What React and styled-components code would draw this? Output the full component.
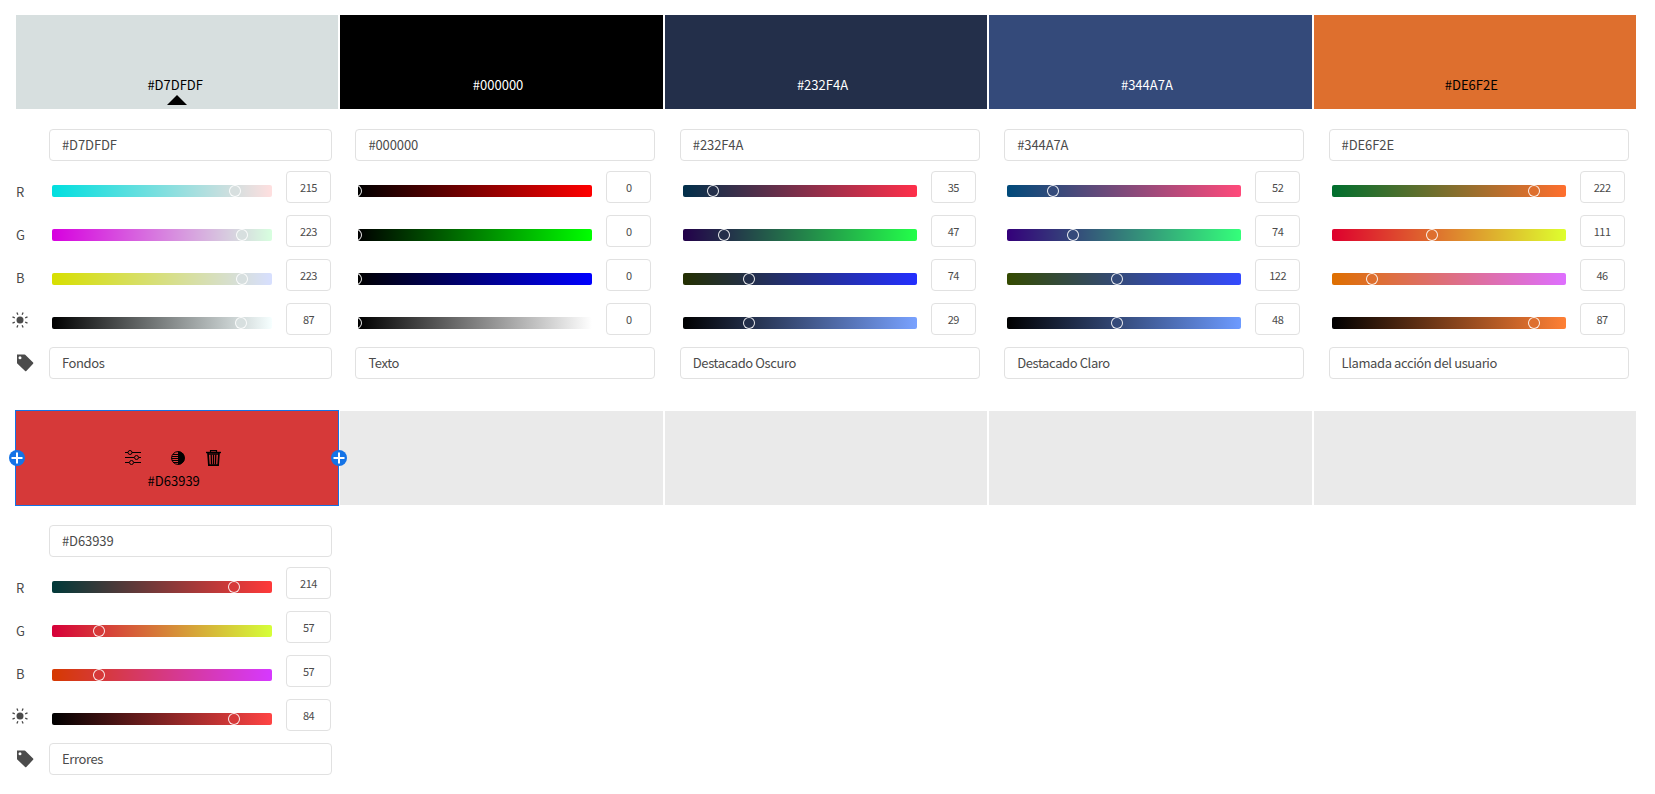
import React from "react";
import styled, { createGlobalStyle } from "styled-components";

const Global = createGlobalStyle`
  * { box-sizing: border-box; }
  body { margin: 0; background: #fff; color: #4b4b4b; font-family: "Noto Sans CJK SC", "Noto Sans", sans-serif; font-size: 13px; }
`;

const Page = styled.main`
  padding: 15px 19px 0 16px;
  width: 1655px;
  height: 794px;
  overflow: hidden;
`;
const Group = styled.section`
  height: 396px;
`;
const Swatches = styled.div`
  display: grid;
  grid-template-columns: repeat(5, 1fr);
  gap: 2px;
  height: 94px;
`;
const Swatch = styled.div`
  position: relative;
  display: flex;
  flex-direction: column;
  align-items: center;
  justify-content: flex-end;
  background: ${(p) => p.$color};
  color: ${(p) => p.$ink};
  outline: ${(p) => (p.$active ? "1px solid #1473e6" : "none")};
  padding-bottom: 14px;
  z-index: ${(p) => (p.$active ? 1 : 0)};
`;
const Code = styled.span`
  line-height: 20px;
  margin-right: ${(p) => (p.$base ? 4 : 7)}px;
`;
const Marker = styled.svg`
  position: absolute;
  bottom: 4px;
  left: 151px;
`;
const Tools = styled.div`
  display: flex;
  align-items: center;
  height: 16px;
  margin: 0 0 5px 0;
  padding-right: 9px;
`;
const ToolIcon = styled.svg`
  display: block;
  margin-left: ${(p) => p.$gap || 0}px;
`;
const AddButton = styled.button`
  position: absolute;
  top: 39px;
  ${(p) => (p.$right ? "right: -9px" : "left: -7px")};
  width: 16px;
  height: 16px;
  padding: 0;
  border: 0;
  border-radius: 50%;
  background: #1473e6;
  display: flex;
  align-items: center;
  justify-content: center;
`;
const Panels = styled.div`
  display: grid;
  grid-template-columns: repeat(5, 1fr);
  column-gap: 2px;
  padding-top: 20px;
`;
const Panel = styled.div`
  display: flex;
  padding-left: ${(p) => (p.$first ? 0 : 15)}px;
`;
const Legend = styled.div`
  width: 33px;
  display: flex;
  flex-direction: column;
  padding-top: 41px;
`;
const LegendItem = styled.div`
  height: 43px;
  display: flex;
  align-items: center;
`;
const LegendIcon = styled(LegendItem)`
  margin-left: ${(p) => p.$left}px;
  padding-bottom: 2px;
`;
const Controls = styled.div`
  width: ${(p) => (p.$first ? 283 : 300)}px;
`;
const Field = styled.div`
  height: 32px;
  border: 1px solid #e1e1e1;
  border-radius: 4px;
  padding: 0 12px;
  line-height: 30px;
  white-space: nowrap;
  letter-spacing: ${(p) => (p.$label ? "-0.4px" : "-0.1px")};
`;
const Channels = styled.div`
  display: flex;
  flex-direction: column;
  gap: 12px;
  padding: 10px 0 12px 3px;
`;
const Channel = styled.div`
  display: flex;
  gap: 14px;
  height: 32px;
`;
const Track = styled.div`
  position: relative;
  overflow: hidden;
  width: ${(p) => (p.$first ? 220 : 234)}px;
  height: 12px;
  margin-top: 14px;
  border-radius: 2px;
  background: linear-gradient(to right, ${(p) => p.$from}, ${(p) => p.$to});
`;
const Thumb = styled.i`
  position: absolute;
  top: 0;
  width: 12px;
  height: 12px;
  border: 1px solid rgba(255, 255, 255, 0.9);
  border-radius: 50%;
  background: ${(p) => p.$color};
`;
const Amount = styled.div`
  width: 45px;
  height: 32px;
  border: 1px solid #e1e1e1;
  border-radius: 4px;
  text-align: center;
  font-size: 11px;
  line-height: 31px;
  letter-spacing: -0.5px;
`;

const Sun = () => (
  <svg width="16" height="16" viewBox="0 0 16 16" stroke="#4b4b4b" strokeWidth="1.3">
    <circle cx="8" cy="8" r="3.5" fill="#4b4b4b" stroke="none" />
    <path d="M13.2 10.1l2.3 1M10.1 13.2l1 2.3M5.9 13.2l-1 2.3M2.8 10.1l-2.3 1M2.8 5.9l-2.3-1M5.9 2.8l-1-2.3M10.1 2.8l1-2.3M13.2 5.9l2.3-1" />
  </svg>
);
const Tag = () => (
  <svg width="18" height="18" viewBox="0 0 18 18">
    <path fillRule="evenodd" fill="#4b4b4b" d="M1 .5h7.5a1 1 0 0 1 .7.3l7.900 7.800a.9.9 0 0 1 0 1.200l-6.800 7.200a.9.9 0 0 1-1.200 0L1 9.200zM4 2.200a1.500 1.500 0 1 0 0 3 1.500 1.500 0 0 0 0-3z" />
  </svg>
);
const Sliders = () => (
  <ToolIcon width="16" height="16" viewBox="0 0 16 16" fill="none" stroke="#000">
    <path d="M0 2.5h3M7 2.5h9M0 7.5h9M14 7.5h2M0 12.5h4M9 12.5h7" />
    <circle cx="5" cy="2.5" r="2" />
    <circle cx="11.5" cy="7.5" r="2" />
    <circle cx="6.5" cy="12.5" r="2" />
  </ToolIcon>
);
const Contrast = () => (
  <ToolIcon $gap={30} width="14" height="14" viewBox="0 0 14 14">
    <circle cx="7" cy="7" r="6.4" fill="none" stroke="#000" />
    <path d="M7 .3a6.7 6.7 0 0 1 0 13.4z" />
    <path d="M2 3.5h5M1 5.5h6M.6 7.5h6.4M1 9.5h6M2 11.5h5" stroke="#000" />
  </ToolIcon>
);
const Trash = () => (
  <ToolIcon $gap={21} width="15" height="16" viewBox="0 0 15 16" fill="none" stroke="#000">
    <path d="M4.5 2V.7h6V2" strokeWidth="1.2" />
    <path d="M0 2.5h15" strokeWidth="1.4" />
    <path d="M2 3l.9 12.3h9.200L13 3" strokeWidth="1.7" />
    <path d="M5.200 4.500l.3 10M7.500 4.500v10M9.800 4.500l-.3 10" strokeWidth="1.300" />
    <path d="M2.500 15.200h10M2 4h11" strokeWidth="1.500" />
  </ToolIcon>
);
const Plus = () => (
  <svg width="12" height="12" viewBox="0 0 12 12">
    <path d="M6 .5v11M.5 6h11" stroke="#fff" strokeWidth="2" />
  </svg>
);

const colors = [
  { rgb: [215, 223, 223], level: 87, hex: "#D7DFDF", name: "Fondos", ink: "#000", base: true },
  { rgb: [0, 0, 0], level: 0, hex: "#000000", name: "Texto", ink: "#fff" },
  { rgb: [35, 47, 74], level: 29, hex: "#232F4A", name: "Destacado Oscuro", ink: "#fff" },
  { rgb: [52, 74, 122], level: 48, hex: "#344A7A", name: "Destacado Claro", ink: "#fff" },
  { rgb: [222, 111, 46], level: 87, hex: "#DE6F2E", name: "Llamada acción del usuario", ink: "#000" },
];
const error = { rgb: [214, 57, 57], level: 84, hex: "#D63939", name: "Errores", ink: "#000" };

const css = (rgb) => `rgb(${rgb.join(",")})`;

function Slider({ ratio, from, to, value, first, color }) {
  return (
    <Channel>
      <Track $first={first} $from={from} $to={to}>
        <Thumb $color={color} style={{ left: Math.round(ratio * (first ? 219.4 : 234)) - 8 }} />
      </Track>
      <Amount>{value}</Amount>
    </Channel>
  );
}

function Editor({ color, first }) {
  const { rgb, level, hex, name } = color;
  const at = (i, v) => css(rgb.map((c, j) => (i === j ? v : c)));
  const max = Math.max(...rgb);
  const bright = max ? rgb.map((c) => Math.round((c * 255) / max)) : [255, 255, 255];
  return (
    <Panel $first={first}>
      {first && (
        <Legend>
          <LegendItem>R</LegendItem>
          <LegendItem>G</LegendItem>
          <LegendItem>B</LegendItem>
          <LegendIcon $left={-4}><Sun /></LegendIcon>
          <LegendIcon $left={0}><Tag /></LegendIcon>
        </Legend>
      )}
      <Controls $first={first}>
        <Field>{hex}</Field>
        <Channels>
          {rgb.map((v, i) => (
            <Slider key={i} first={first} value={v} ratio={v / 255} from={at(i, 0)} to={at(i, 255)} color={css(rgb)} />
          ))}
          <Slider first={first} value={level} ratio={level / 100} from="#000" to={css(bright)} color={css(rgb)} />
        </Channels>
        <Field $label>{name}</Field>
      </Controls>
    </Panel>
  );
}

export default function App() {
  return (
    <>
      <Global />
      <Page>
        <Group>
          <Swatches>
            {colors.map((c) => (
              <Swatch key={c.hex} $color={c.hex} $ink={c.ink}>
                <Code $base={c.base}>{c.hex}</Code>
                {c.base && (
                  <Marker width="20" height="10">
                    <path d="M0 10L10 0l10 10z" />
                  </Marker>
                )}
              </Swatch>
            ))}
          </Swatches>
          <Panels>
            {colors.map((c, i) => (
              <Editor key={c.hex} color={c} first={i === 0} />
            ))}
          </Panels>
        </Group>
        <Group>
          <Swatches>
            <Swatch $color={error.hex} $ink={error.ink} $active>
              <Tools>
                <Sliders />
                <Contrast />
                <Trash />
              </Tools>
              <Code>{error.hex}</Code>
              <AddButton aria-label="+"><Plus /></AddButton>
              <AddButton $right aria-label="+"><Plus /></AddButton>
            </Swatch>
            {[1, 2, 3, 4].map((n) => (
              <Swatch key={n} $color="#eaeaea" />
            ))}
          </Swatches>
          <Panels>
            <Editor color={error} first />
          </Panels>
        </Group>
      </Page>
    </>
  );
}
